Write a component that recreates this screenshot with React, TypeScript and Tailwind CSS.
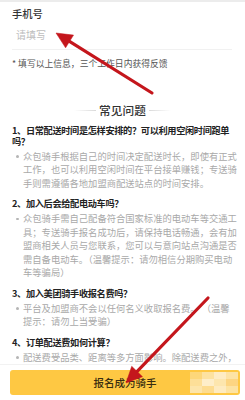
import React from "react";

const faqs = [
  {
    q: "1、日常配送时间是怎样安排的？可以利用空闲时间跑单吗？",
    a: "众包骑手根据自己的时间决定配送时长，即使有正式工作，也可以利用空闲时间在平台接单赚钱；专送骑手则需遵循各地加盟商配送站点的时间安排。",
  },
  {
    q: "2、加入后会给配电动车吗？",
    a: "众包骑手需自己配备符合国家标准的电动车等交通工具；专送骑手报名成功后，请保持电话畅通，会有加盟商相关人员与您联系，您可以与意向站点沟通是否需自备电动车。（温馨提示：请勿相信分期购买电动车等骗局）",
  },
  {
    q: "3、加入美团骑手收报名费吗？",
    a: "平台及加盟商不会以任何名义收取报名费。 （温馨提示：请勿上当受骗）",
  },
  {
    q: "4、订单配送费如何计算？",
    a: "配送费受品类、距离等多方面影响。除配送费之外，还有各类奖励补贴等收入。",
  },
];

// pixelated watermark blocks on the right of the button
const mosaic = [
  "#fdd77a", "#fde2a0", "#feecc4", "#fde3a6",
  "#fddf98", "#feeec9", "#fde6ae", "#fdd582",
  "#fde5aa", "#fddc90", "#feebc0", "#fde3a2",
];

function Arrow({ x1, y1, x2, y2 }: { x1: number; y1: number; x2: number; y2: number }) {
  const dx = x2 - x1;
  const dy = y2 - y1;
  const len = Math.hypot(dx, dy);
  const ux = dx / len;
  const uy = dy / len;
  const bx = x2 - ux * 16;
  const by = y2 - uy * 16;
  const px = -uy * 7.5;
  const py = ux * 7.5;
  return (
    <g fill="#c4161c" stroke="#c4161c">
      <line x1={x1} y1={y1} x2={bx + ux * 2} y2={by + uy * 2} strokeWidth={3.2} strokeLinecap="round" />
      <polygon points={`${x2},${y2} ${bx + px},${by + py} ${bx - px},${by - py}`} strokeWidth={0.5} />
    </g>
  );
}

export default function App() {
  return (
    <div
      className="relative flex h-[400px] w-[245px] flex-col overflow-hidden bg-white"
      style={{ fontFamily: '"Noto Sans CJK SC", "Noto Sans", sans-serif' }}
    >
      <div className="min-h-0 flex-1 overflow-hidden">
        <div className="h-[2px] bg-[#ececec]" />

        {/* phone field */}
        <div className="px-3">
          <div className="mr-[1px] border-b border-[#f1f1f1] pt-[5px] pb-[7px]">
            <div className="text-[10.3px] leading-[14px] font-medium text-[#333]">手机号</div>
            <div className="mt-[7px] pl-[4px] text-[10px] leading-[14px] text-[#bdbdbd]">请填写</div>
          </div>
          <p className="mt-[8px] text-[8.8px] leading-[12px] text-[#555]">* 填写以上信息，三个工作日内获得反馈</p>
        </div>

        {/* FAQ */}
        <div className="mt-[32px] flex items-center justify-center gap-[3px]">
          <span className="h-px w-[22px] bg-gradient-to-r from-transparent to-[#d9d9d9]" />
          <h2 className="text-[11.7px] leading-[16px] font-medium text-[#333]">常见问题</h2>
          <span className="h-px w-[22px] bg-gradient-to-r from-[#d9d9d9] to-transparent" />
        </div>

        <div className="mt-[6.5px] w-[245px] pl-3">
          {faqs.map((item) => (
            <div key={item.q} className="mb-[8px]">
              <h3 className="text-[9.2px] leading-[11px] font-bold tracking-[-0.35px] text-[#222]">{item.q}</h3>
              <div className="mt-[3px] flex">
                <span className="mt-[5.5px] ml-[4px] h-[2.5px] w-[2.5px] shrink-0 rounded-full bg-[#b5b5b5]" />
                <p className="ml-[4.5px] w-[215px] text-[9.3px] leading-[13.5px] text-[#a9a9a9]">{item.a}</p>
              </div>
            </div>
          ))}
        </div>
      </div>

      {/* bottom bar */}
      <div className="h-[36px] shrink-0 border-t border-[#f2f2f2] bg-white px-[10px] pt-[5px]">
        <button className="relative flex h-[25px] w-[230px] items-center justify-center overflow-hidden rounded-[3px] bg-[#fec843] text-[10.5px] font-medium text-[#3a2e10]">
          报名成为骑手
          <span className="absolute top-[2px] right-[2px] grid grid-cols-4">
            {mosaic.map((c, i) => (
              <span key={i} className="h-[7px] w-[12px]" style={{ backgroundColor: c }} />
            ))}
          </span>
        </button>
      </div>

      {/* red annotation arrows */}
      <svg className="pointer-events-none absolute inset-0" width={245} height={400} viewBox="0 0 245 400">
        <Arrow x1={152} y1={93} x2={56} y2={33} />
        <Arrow x1={208} y1={298} x2={126} y2={383} />
      </svg>
    </div>
  );
}
